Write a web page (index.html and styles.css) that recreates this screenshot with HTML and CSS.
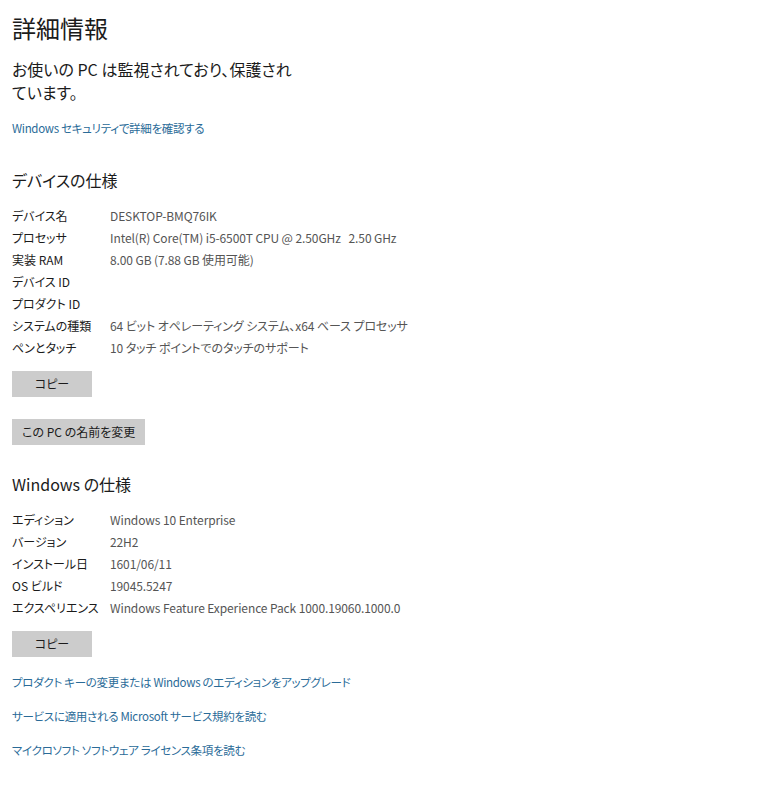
FILE: index.html
```html
<!DOCTYPE html>
<html lang="ja">
<head>
<meta charset="utf-8">
<title>詳細情報</title>
<link rel="stylesheet" href="styles.css">
</head>
<body>
<main class="page">
  <h1 class="title">詳細情報</h1>
  <p class="status">お使いの PC は監視されており、保護されています。</p>
  <a class="link link-first" href="#">Windows セキュリティで詳細を確認する</a>

  <h2 class="section-title">デバイスの仕様</h2>
  <dl class="specs">
    <div class="row"><dt>デバイス名</dt><dd>DESKTOP-BMQ76IK</dd></div>
    <div class="row"><dt>プロセッサ</dt><dd>Intel(R) Core(TM) i5-6500T CPU @ 2.50GHz&nbsp;&nbsp;&nbsp;2.50 GHz</dd></div>
    <div class="row"><dt>実装 RAM</dt><dd>8.00 GB (7.88 GB 使用可能)</dd></div>
    <div class="row"><dt>デバイス ID</dt><dd></dd></div>
    <div class="row"><dt>プロダクト ID</dt><dd></dd></div>
    <div class="row"><dt>システムの種類</dt><dd>64 ビット オペレーティング システム、x64 ベース プロセッサ</dd></div>
    <div class="row"><dt>ペンとタッチ</dt><dd>10 タッチ ポイントでのタッチのサポート</dd></div>
  </dl>
  <button class="btn btn-copy" type="button">コピー</button>
  <button class="btn btn-rename" type="button">この PC の名前を変更</button>

  <h2 class="section-title section-windows">Windows の仕様</h2>
  <dl class="specs">
    <div class="row"><dt>エディション</dt><dd>Windows 10 Enterprise</dd></div>
    <div class="row"><dt>バージョン</dt><dd>22H2</dd></div>
    <div class="row"><dt>インストール日</dt><dd>1601/06/11</dd></div>
    <div class="row"><dt>OS ビルド</dt><dd>19045.5247</dd></div>
    <div class="row"><dt>エクスペリエンス</dt><dd>Windows Feature Experience Pack 1000.19060.1000.0</dd></div>
  </dl>
  <button class="btn btn-copy" type="button">コピー</button>

  <nav class="links">
    <a class="link" href="#">プロダクト キーの変更または Windows のエディションをアップグレード</a>
    <a class="link" href="#">サービスに適用される Microsoft サービス規約を読む</a>
    <a class="link" href="#">マイクロソフト ソフトウェア ライセンス条項を読む</a>
  </nav>
</main>
</body>
</html>
```

FILE: styles.css
```css
html, body {
  margin: 0;
  padding: 0;
  background: #ffffff;
}

body {
  font-family: "Noto Sans CJK JP", "Noto Sans", sans-serif;
  font-feature-settings: "palt";
  color: #1b1b1b;
}

.page {
  display: flex;
  flex-direction: column;
  align-items: flex-start;
  padding: 12px 12px 0 12px;
}

.title {
  margin: 0;
  font-size: 24px;
  line-height: 32px;
  font-weight: 400;
  color: #1b1b1b;
}

.status {
  margin: 14px 0 0 0;
  max-width: 290px;
  font-size: 16px;
  line-height: 23px;
  color: #1b1b1b;
}

.link {
  display: block;
  font-size: 11.5px;
  letter-spacing: -0.3px;
  line-height: 20px;
  color: #2a6b98;
  text-decoration: none;
  white-space: nowrap;
}

.link-first {
  margin-top: 14px;
}

.section-title {
  margin: 30px 0 0 0;
  font-size: 16px;
  line-height: 24px;
  font-weight: 400;
  color: #1b1b1b;
}

.section-windows {
  margin-top: 27px;
}

.specs {
  margin: 13px 0 0 0;
  display: flex;
  flex-direction: column;
}

.row {
  display: grid;
  grid-template-columns: 98px auto;
  font-size: 12px;
  line-height: 22px;
  height: 22px;
}

.row dt {
  color: #1b1b1b;
}

.row dd {
  margin: 0;
  color: #555555;
  white-space: nowrap;
  letter-spacing: -0.1px;
}

.btn {
  margin-top: 12px;
  height: 26px;
  padding: 0 10px;
  border: none;
  background: #cccccc;
  color: #1b1b1b;
  font-family: inherit;
  font-feature-settings: "palt";
  font-size: 12px;
  line-height: 26px;
}

.btn-copy {
  width: 80px;
}

.btn-rename {
  margin-top: 22px;
}

.links {
  margin-top: 15px;
  display: flex;
  flex-direction: column;
  gap: 14px;
}
```
